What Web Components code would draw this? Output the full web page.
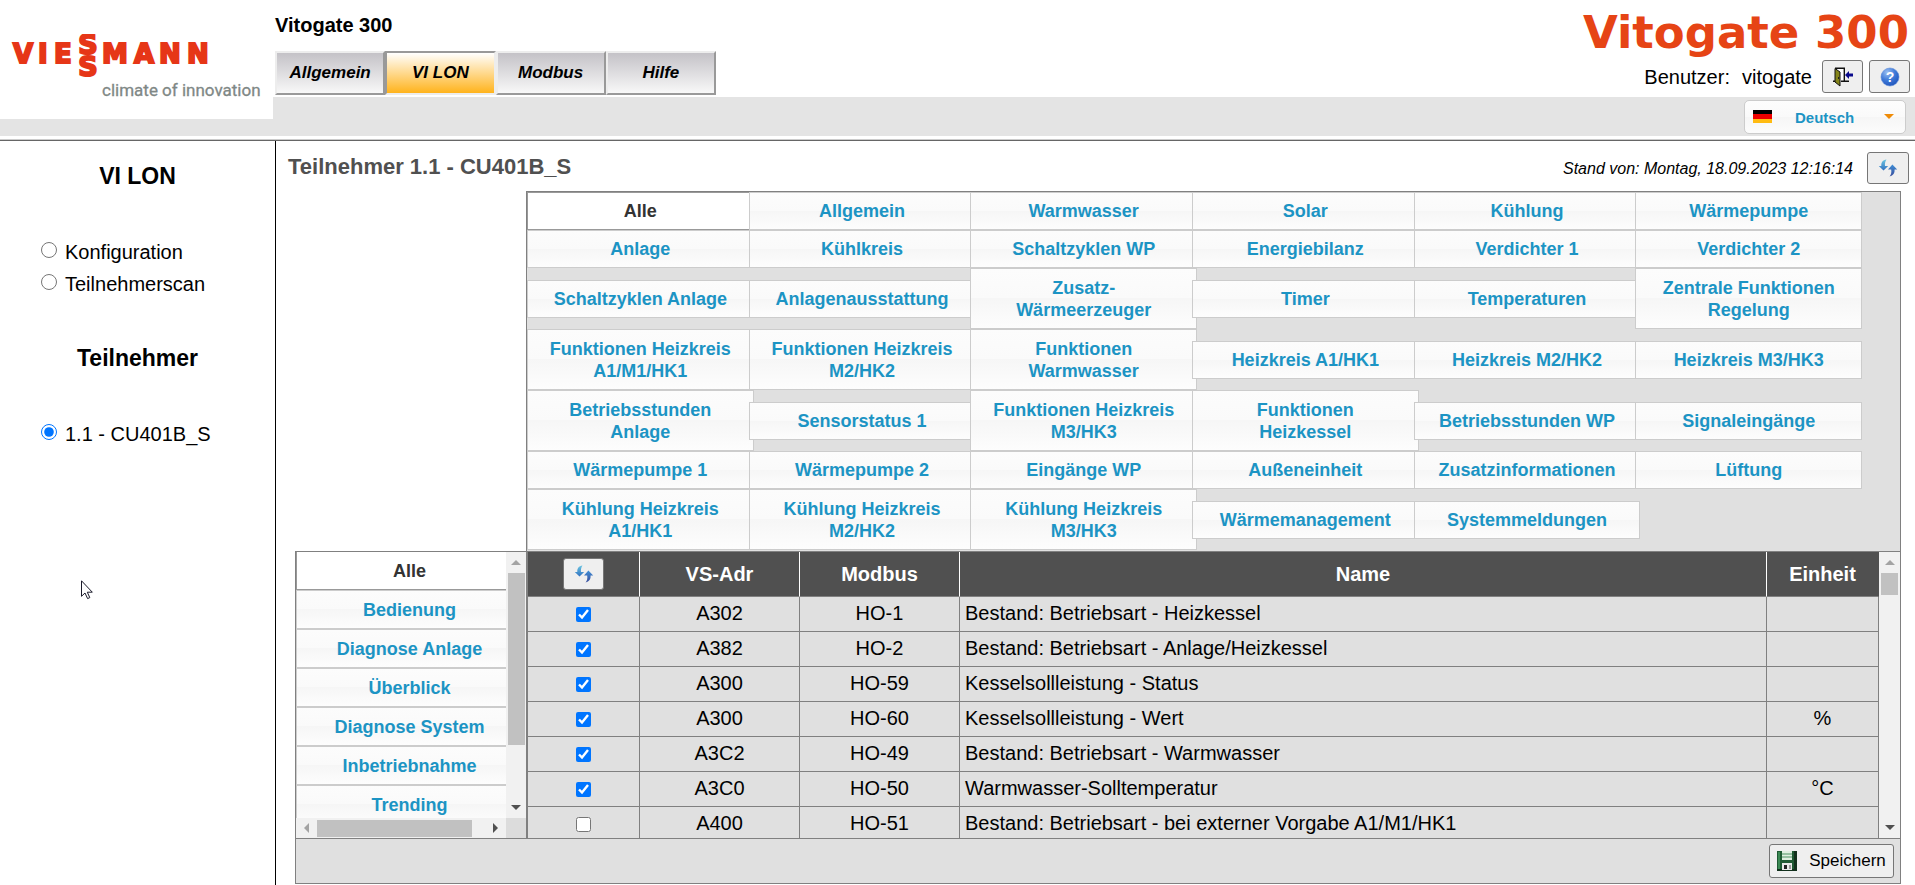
<!DOCTYPE html>
<html lang="de">
<head>
<meta charset="utf-8">
<title>Vitogate 300</title>
<style>
  html, body { margin: 0; height: 100%; }
  body { font-family: "Liberation Sans", Arial, sans-serif; font-size: 20px; color: #000; background: #fff; overflow: hidden; }
</style>
</head>
<body>
<vg-app></vg-app>

<script>
const define = (name, html, setup) => {
  const template = document.createElement('template');
  template.innerHTML = html;
  customElements.define(name, class extends HTMLElement {
    constructor() {
      super();
      this.attachShadow({ mode: 'open' }).append(template.content.cloneNode(true));
    }
    connectedCallback() { if (setup) setup(this, this.shadowRoot); }
  });
};

const ICONS = {
  refresh: `<svg width="20" height="20" viewBox="0 0 20 20"><defs><linearGradient id="a" x1="0" y1="0" x2="0" y2="1"><stop offset="0" stop-color="#6cc6e2"/><stop offset="1" stop-color="#2f6fc0"/></linearGradient><linearGradient id="b" x1="0" y1="0" x2="0" y2="1"><stop offset="0" stop-color="#3f8fd6"/><stop offset="1" stop-color="#3a4d9c"/></linearGradient></defs>
    <path fill="url(#a)" d="M8.500 1.500C4.800 2 3 4.200 3.300 8H.8l4.700 4.600L10.200 8H7c-.3-2.400.1-4.300 1.500-6.500z"/>
    <path fill="url(#b)" d="M14.400 6.500L19.200 11.500h-2.600c.3 3.600-1.300 6-5 7 1.600-2 2-4 1.600-7h-3.200z"/></svg>`,
  exit: `<svg width="20" height="20" viewBox="0 0 20 20"><path fill="#fff" d="M2 1h9v13H2z"/><path fill="none" stroke="#111" stroke-width="1.400" d="M2 1.200h9.300V14M0 14.200h2M8 14.200h8"/><path fill="#85851a" stroke="#111" stroke-width="1" d="M2 1.500l5 3.500v14l-5-4z"/><path fill="#222" d="M5 10h1v2H5z"/><path fill="#0a0a8c" d="M12 8l4-4v2.500h4v3h-4V12z"/></svg>`,
  help: `<svg width="20" height="20" viewBox="0 0 20 20"><defs><radialGradient id="h" cx=".35" cy=".25" r=".85"><stop offset="0" stop-color="#9cc0f2"/><stop offset=".5" stop-color="#3f7ad8"/><stop offset="1" stop-color="#1c4fb8"/></radialGradient></defs><circle cx="10" cy="10" r="9" fill="url(#h)" stroke="#5b8ad8" stroke-width=".6"/><text x="10" y="15" text-anchor="middle" font-family="Liberation Sans" font-weight="700" font-size="14" fill="#fff">?</text></svg>`,
  disk: `<svg width="20" height="20" viewBox="0 0 20 20"><path fill="#1f5a33" d="M0 0h20v20H0z"/><path fill="#12301c" d="M17 0h3v20h-3zM0 18h20v2H0z"/><path fill="#3c8a55" d="M1 1h2v17H1z"/><path fill="#dfeee0" d="M5 0h10v9H5z"/><path stroke="#4f9162" stroke-width="1.200" d="M5 3h10M5 6h10"/><path fill="#e8e8e8" d="M5 12h10v7H5z"/><path fill="#222" d="M7 14h3v4H7z"/><path fill="#999" d="M12 14h2v4h-2z"/></svg>`
};

/* Icon, chosen by its name attribute */
define('vg-icon', `<style>:host{display:inline-flex} svg{display:block}</style><span></span>`,
  (el, root) => { root.querySelector('span').innerHTML = ICONS[el.getAttribute('name')]; });

/* Grey push button with slotted content */
define('vg-button', `<style>
  :host{display:block}
  button{box-sizing:border-box;width:100%;height:100%;margin:0;padding:0;display:flex;align-items:center;justify-content:center;gap:12px;
    font:17px "Liberation Sans",Arial,sans-serif;color:#000;background:#efefef;border:1px solid #767676;border-radius:3px}
</style><button type="button"><slot></slot></button>`,
  (el, root) => { if (el.title) root.querySelector('button').setAttribute('aria-label', el.title); });

/* Company wordmark with claim */
define('vg-logo', `<style>:host{display:block;background:#fff} svg{display:block}
  .w{font:700 26px "DejaVu Sans",sans-serif;fill:#e63617;stroke:#e63617;stroke-width:2}
  .s{width:24px;font:700 27px/22px "DejaVu Sans",sans-serif;color:#e63617;-webkit-text-stroke:2px #e63617;text-align:center}
  .c{font:17px Roboto,sans-serif;fill:#7f8886;stroke:#7f8886;stroke-width:.3}</style>
<svg width="273" height="119" viewBox="0 0 273 119" role="img" aria-label="Viessmann">
  <g class="w"><text x="13" y="63">V</text><text x="38" y="63">I</text><text x="54" y="63">E</text>
  <text x="102" y="63">M</text><text x="134" y="63">A</text><text x="159" y="63">N</text><text x="187" y="63">N</text></g>
  <foreignObject x="76" y="34" width="24" height="46"><div class="s">S S</div></foreignObject>
  <text class="c" x="102" y="96">climate of innovation</text>
</svg>`);

/* Main navigation */
define('vg-nav', `<style>
  :host{display:block}
  nav{display:flex;width:441px}
  button{flex:1;box-sizing:border-box;height:44px;padding:0;font:italic 700 17px "Liberation Sans",Arial,sans-serif;color:#000;
    border:2px solid;border-color:#ededed #999 #999 #ededed;background:linear-gradient(#c4c2c7,#f8f8f8)}
  button.on{border-color:#999 #ededed #ededed #999;background:linear-gradient(#fff,#ffb31c)}
</style><nav><button>Allgemein</button><button class="on" aria-current="page">VI LON</button><button>Modbus</button><button>Hilfe</button></nav>`);

/* Language chooser with flag */
define('vg-language', `<style>
  :host{display:block}
  label{position:relative;display:block}
  select{appearance:none;box-sizing:border-box;width:162px;height:34px;padding:0 50px;border:1px solid #ccc;border-radius:5px;
    background:linear-gradient(#fdfdfd 0,#fafafa 49%,#f6f6f6 50%,#fcfcfc 100%);color:#1c94c4;font:700 15px "Liberation Sans",Arial,sans-serif}
  i{position:absolute;left:9px;top:10px;width:19px;height:13px;background:linear-gradient(#000 0 33%,#e00 33% 67%,#fb1 67%)}
  b{position:absolute;right:12px;top:14px;border:5px solid transparent;border-top-color:#ef8c08;border-bottom:0}
</style><label><select aria-label="Sprache"><option>Deutsch</option></select><i></i><b></b></label>`);

/* Page head */
define('vg-header', `<style>
  :host{display:flex;align-items:flex-start;background:#e4e4e4;height:136px;flex:none}
  vg-logo{width:273px;flex:none}
  .right{flex:1}
  .top{display:flex;justify-content:space-between;background:#fff;height:97px;padding:0 5px 0 2px}
  h1{margin:0;font-size:20px;line-height:24px;padding:13px 0 14px}
  .user{display:flex;flex-direction:column;align-items:flex-end}
  .brand{font:700 45px/54px "DejaVu Sans",sans-serif;color:#e64415;padding:6px 0 0;margin-right:1px}
  .line{display:flex;gap:6px;line-height:34px}
  .line span{margin-right:6px}
  .line span + span{margin-right:4px}
  vg-button{height:33px;width:41px}
  .lang{display:flex;justify-content:flex-end;padding:3px 9px 0}
</style>
<vg-logo></vg-logo>
<div class="right">
  <div class="top">
    <div><h1>Vitogate 300</h1><vg-nav></vg-nav></div>
    <div class="user"><div class="brand">Vitogate 300</div>
      <div class="line"><span>Benutzer:</span><span>vitogate</span>
        <vg-button title="Abmelden"><vg-icon name="exit"></vg-icon></vg-button>
        <vg-button title="Hilfe"><vg-icon name="help"></vg-icon></vg-button></div></div>
  </div>
  <div class="lang"><vg-language></vg-language></div>
</div>`);

/* Left column with the page choices */
define('vg-sidebar', `<style>
  :host{display:block;box-sizing:border-box;width:276px;border-right:1px solid #000;flex:none}
  h2{margin:0;font-size:23px;line-height:28px;text-align:center}
  h2:first-of-type{padding:21px 0 46px}
  h2.sub{padding:44px 0 46px}
  label{display:flex;height:32px;line-height:32px;padding-left:41px;gap:8px}
  input{width:16px;height:16px;margin:6px 0 0}
</style>
<h2>VI LON</h2>
<label><input type="radio" name="page"><span>Konfiguration</span></label>
<label><input type="radio" name="page"><span>Teilnehmerscan</span></label>
<h2 class="sub">Teilnehmer</h2>
<label><input type="radio" name="page" checked><span>1.1 - CU401B_S</span></label>`);

const TAB_CSS = `button{box-sizing:border-box;display:block;margin:0;padding:7px 0;font:700 18px/22px "Liberation Sans",Arial,sans-serif;text-align:center;
    color:#1c94c4;border:1px solid #ccc;background:linear-gradient(#fcfcfc 0,#fafafa 49%,#f6f6f6 50%,#fdfdfd 100%)}
  button.on{color:#333;background:#fff;border-color:#999}`;

/* Filter grid; "|" marks a line break in a label */
define('vg-category-grid', `<style>
  :host{display:grid;grid-template-columns:repeat(6,minmax(0,1fr));align-items:center;padding:0 43px 1px 0;background:#e0e0e0;border:1px solid #808080;border-bottom:0}
  ${TAB_CSS}
  button{width:calc(100% + 5px)}
  button.two{padding:8px 0 7px}
</style>`, (el, root) => {
  const labels = ['Alle','Allgemein','Warmwasser','Solar','Kühlung','Wärmepumpe',
    'Anlage','Kühlkreis','Schaltzyklen WP','Energiebilanz','Verdichter 1','Verdichter 2',
    'Schaltzyklen Anlage','Anlagenausstattung','Zusatz-|Wärmeerzeuger','Timer','Temperaturen','Zentrale Funktionen|Regelung',
    'Funktionen Heizkreis|A1/M1/HK1','Funktionen Heizkreis|M2/HK2','Funktionen|Warmwasser','Heizkreis A1/HK1','Heizkreis M2/HK2','Heizkreis M3/HK3',
    'Betriebsstunden|Anlage','Sensorstatus 1','Funktionen Heizkreis|M3/HK3','Funktionen|Heizkessel','Betriebsstunden WP','Signaleingänge',
    'Wärmepumpe 1','Wärmepumpe 2','Eingänge WP','Außeneinheit','Zusatzinformationen','Lüftung',
    'Kühlung Heizkreis|A1/HK1','Kühlung Heizkreis|M2/HK2','Kühlung Heizkreis|M3/HK3','Wärmemanagement','Systemmeldungen'];
  labels.forEach((text, i) => {
    const b = document.createElement('button');
    b.type = 'button';
    b.innerHTML = text.replace('|', '<br>');
    if (text.includes('|')) b.classList.add('two');
    if (i === 0) b.classList.add('on');
    root.append(b);
  });
});

/* Scroll bar; the thumb length comes from --size */
define('vg-scrollbar', `<style>
  :host{display:flex;flex-direction:column;align-items:center;background:#f1f1f1;box-sizing:border-box;width:20px;padding:8px 0}
  :host([horizontal]){flex-direction:row;width:auto;height:20px;padding:0 8px}
  .a,.z{flex:none;width:0;height:0;border:5px solid transparent}
  .a{border-bottom-color:#a3a3a3;border-top:0} .z{border-top-color:#505050;border-bottom:0}
  :host([horizontal]) .a{border:5px solid transparent;border-right-color:#a3a3a3;border-left:0}
  :host([horizontal]) .z{border:5px solid transparent;border-left-color:#505050;border-right:0}
  .track{flex:1;display:flex;width:17px;margin:8px 0;flex-direction:column}
  .thumb{background:#c1c1c1;height:var(--size)}
  :host([horizontal]) .track{width:auto;height:17px;margin:0 8px;flex-direction:row}
  :host([horizontal]) .thumb{height:17px;width:var(--size)}
</style><div class="a"></div><div class="track"><div class="thumb"></div></div><div class="z"></div>`);

/* Scrolling list of sub filters */
define('vg-side-list', `<style>
  :host{display:grid;grid-template-columns:minmax(0,1fr) 20px;grid-template-rows:minmax(0,1fr) 20px;box-sizing:border-box;border:1px solid #808080;border-right:0;border-bottom:0;background:#dcdcdc}
  .list{overflow:hidden;background:#fff}
  ${TAB_CSS}
  button{width:227px;height:39px}
  button:first-child{margin-top:-1px}
</style>
<div class="list"><button class="on">Alle</button><button>Bedienung</button><button>Diagnose Anlage</button><button>Überblick</button><button>Diagnose System</button><button>Inbetriebnahme</button><button>Trending</button></div>
<vg-scrollbar style="--size:77%"></vg-scrollbar>
<vg-scrollbar horizontal style="--size:92%"></vg-scrollbar>`);

/* Data point table */
define('vg-data-table', `<style>
  :host{display:flex;box-sizing:border-box;border:1px solid #808080;border-left-width:2px;border-bottom:0;background:#e0e0e0}
  .view{flex:1;min-width:0;overflow:hidden}
  table{width:100%;table-layout:fixed;border-collapse:separate;border-spacing:0}
  th,td{box-sizing:border-box;padding:0;text-align:center;line-height:24px;border:0 solid #808080;border-width:0 1px 1px 0}
  th{height:45px;background:#505050;color:#fff;border-right-color:#fff}
  th:last-child{border-right-color:#505050}
  td{height:35px;padding:0 0 3px}
  td.name{text-align:left;padding-left:5px}
  input{display:block;width:15px;height:15px;margin:3px auto 0}
  vg-button{width:41px;height:32px;margin:0 auto}
  .s{width:112px}.m{width:160px}
  vg-scrollbar{width:21px}
</style>
<div class="view"><table>
<colgroup><col class="s"><col class="m"><col class="m"><col><col class="s"></colgroup>
<thead><tr><th><vg-button title="Aktualisieren"><vg-icon name="refresh"></vg-icon></vg-button></th><th>VS-Adr</th><th>Modbus</th><th>Name</th><th>Einheit</th></tr></thead>
<tbody></tbody></table></div>
<vg-scrollbar style="--size:9%"></vg-scrollbar>`, (el, root) => {
  const rows = [[1,'A302','HO-1','Bestand: Betriebsart - Heizkessel',''],[1,'A382','HO-2','Bestand: Betriebsart - Anlage/Heizkessel',''],
    [1,'A300','HO-59','Kesselsollleistung - Status',''],[1,'A300','HO-60','Kesselsollleistung - Wert','%'],
    [1,'A3C2','HO-49','Bestand: Betriebsart - Warmwasser',''],[1,'A3C0','HO-50','Warmwasser-Solltemperatur','°C'],
    [0,'A400','HO-51','Bestand: Betriebsart - bei externer Vorgabe A1/M1/HK1','']];
  root.querySelector('tbody').innerHTML = rows.map(r =>
    `<tr><td><input type="checkbox" aria-label="${r[2]}"${r[0] ? ' checked' : ''}></td><td>${r[1]}</td><td>${r[2]}</td><td class="name">${r[3]}</td><td>${r[4]}</td></tr>`).join('');
});

/* Participant view */
define('vg-participant', `<style>
  :host{display:flex;flex-direction:column;flex:1;min-width:0;box-sizing:border-box;padding-bottom:1px}
  .head{display:flex;justify-content:space-between;align-items:center;height:50px;padding:0 6px 0 12px;flex:none}
  h2{margin:0;font-size:22px;line-height:28px;color:#505050;padding-top:2px}
  .stamp{display:flex;align-items:center;gap:14px;font-size:16px;font-style:italic;padding-top:4px}
  .stamp span{padding-top:2px}
  .stamp vg-button{width:42px;height:32px}
  .panel{flex:1;min-height:0;margin:0 14px 0 19px;display:grid;grid-template-columns:231px minmax(0,1fr);grid-template-rows:auto minmax(0,1fr) auto}
  vg-category-grid{grid-column:2}
  .foot{grid-column:1/3;display:flex;justify-content:flex-end;background:#e0e0e0;border:1px solid #808080;padding:5px 6px}
  .foot vg-button{width:125px;height:34px}
  vg-side-list,vg-data-table{min-height:0;overflow:hidden}
</style>
<div class="head"><h2>Teilnehmer 1.1 - CU401B_S</h2><div class="stamp"><span>Stand von: Montag, 18.09.2023 12:16:14</span>
<vg-button title="Aktualisieren"><vg-icon name="refresh"></vg-icon></vg-button></div></div>
<div class="panel"><vg-category-grid></vg-category-grid><vg-side-list></vg-side-list><vg-data-table></vg-data-table>
<div class="foot"><vg-button><vg-icon name="disk"></vg-icon><span>Speichern</span></vg-button></div></div>`);

/* Mouse pointer floating over the page */
define('vg-pointer', `<style>:host{position:absolute;left:81px;top:580px} svg{display:block}</style>
<svg width="13" height="20" viewBox="0 0 13 20"><path fill="#fff" stroke="#1a1a2a" d="M.5 .8v15.500l3.500-3.300 2.600 5.600 2.200-1-2.500-5.400h5z"/></svg>`);

define('vg-app', `<style>
  :host{display:flex;flex-direction:column;height:100vh;background:#fff}
  main{flex:1;min-height:0;display:flex;margin-top:4px;border-top:1px solid #666;box-shadow:0 -1px #ccc}
</style>
<vg-header></vg-header>
<main><vg-sidebar></vg-sidebar><vg-participant></vg-participant></main>
<vg-pointer></vg-pointer>`);
</script>
</body>
</html>
